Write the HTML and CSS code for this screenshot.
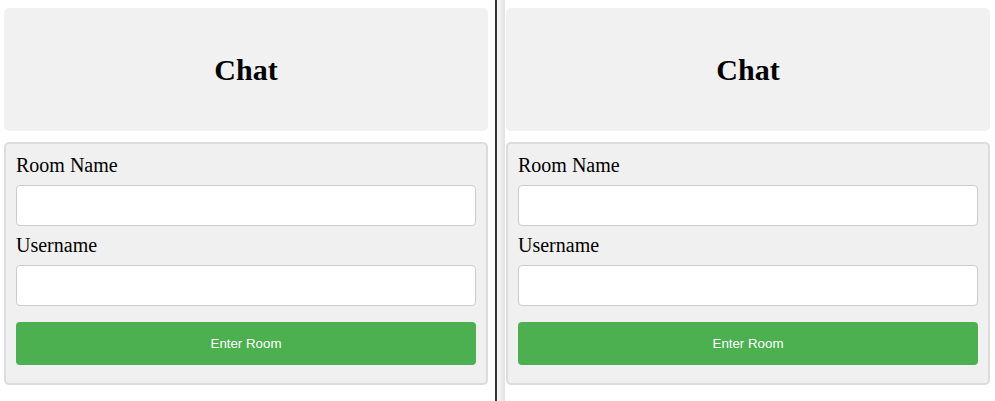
FILE: index.html
```html
<!DOCTYPE html>
<html>
<head>
<meta charset="utf-8">
<link rel="stylesheet" href="styles.css">
</head>
<body>
<div class="split">
  <div class="pane pane-left">
    <header class="head"><h1>Chat</h1></header>
    <form class="card">
      <label class="lbl">Room Name</label>
      <input class="field" type="text">
      <label class="lbl">Username</label>
      <input class="field" type="text">
      <button class="btn" type="button">Enter Room</button>
    </form>
  </div>
  <div class="divider"></div>
  <div class="shade"></div>
  <div class="pane pane-right">
    <header class="head"><h1>Chat</h1></header>
    <form class="card">
      <label class="lbl">Room Name</label>
      <input class="field" type="text">
      <label class="lbl">Username</label>
      <input class="field" type="text">
      <button class="btn" type="button">Enter Room</button>
    </form>
  </div>
</div>
</body>
</html>
```
FILE: styles.css
```css
html, body {
  margin: 0;
  padding: 0;
  background: #fff;
  font-family: "Liberation Serif", "Times New Roman", serif;
}
.split {
  display: flex;
  height: 401px;
  width: 995px;
}
.pane {
  display: flex;
  flex-direction: column;
  gap: 11px;
  padding-top: 8px;
  box-sizing: border-box;
}
.pane-left {
  width: 495px;
  padding-left: 4px;
  padding-right: 7px;
}
.divider {
  width: 2px;
  background: #333;
  flex: none;
}
.shade {
  width: 8px;
  flex: none;
  background: linear-gradient(to right, #f8f8f8, #e2e2e2);
}
.pane-right {
  flex: 1;
  padding-left: 1px;
  padding-right: 5px;
}
.head {
  height: 123px;
  background: #f1f1f1;
  border-radius: 5px;
  display: flex;
  align-items: center;
  justify-content: center;
}
.head h1 {
  margin: 0;
  font-size: 30px;
  font-weight: bold;
  line-height: 1;
  color: #000;
}
.card {
  margin: 0;
  background: #f0f0f0;
  border: 2px solid #dcdcdc;
  border-radius: 5px;
  padding: 10px 10px 18px;
  display: flex;
  flex-direction: column;
}
.lbl {
  font-size: 20px;
  line-height: 23px;
  color: #000;
  margin-bottom: 8px;
}
.field {
  height: 41px;
  box-sizing: border-box;
  border: 1px solid #ccc;
  border-radius: 4px;
  background: #fff;
  margin: 0 0 8px;
}
.btn {
  margin-top: 8px;
  height: 43px;
  border: none;
  border-radius: 4px;
  background: #4caf50;
  color: #fff;
  font-family: "Liberation Sans", Arial, sans-serif;
  font-size: 13.3px;
}
```
